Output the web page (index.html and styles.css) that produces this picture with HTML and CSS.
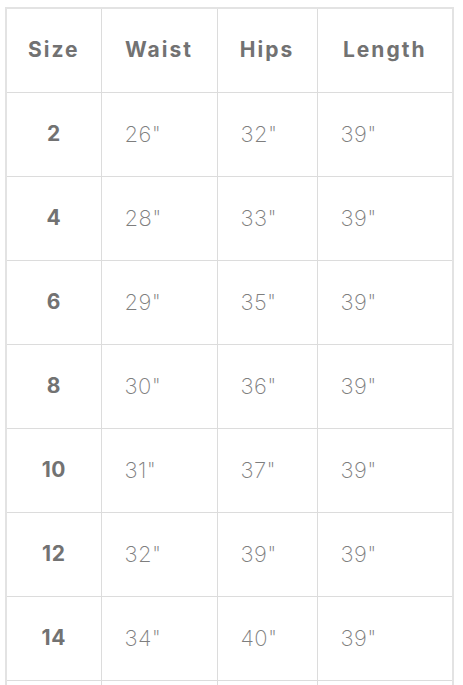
FILE: index.html
```html
<!DOCTYPE html>
<html>
<head>
<meta charset="utf-8">
<link rel="stylesheet" href="styles.css">
</head>
<body>
<table class="size-table">
  <colgroup>
    <col class="c-size"><col class="c-waist"><col class="c-hips"><col class="c-length">
  </colgroup>
  <thead>
    <tr><th class="size">Size</th><th class="head">Waist</th><th class="head">Hips</th><th class="head">Length</th></tr>
  </thead>
  <tbody>
    <tr><td class="size">2</td><td>26"</td><td>32"</td><td>39"</td></tr>
    <tr><td class="size">4</td><td>28"</td><td>33"</td><td>39"</td></tr>
    <tr><td class="size">6</td><td>29"</td><td>35"</td><td>39"</td></tr>
    <tr><td class="size">8</td><td>30"</td><td>36"</td><td>39"</td></tr>
    <tr><td class="size">10</td><td>31"</td><td>37"</td><td>39"</td></tr>
    <tr><td class="size">12</td><td>32"</td><td>39"</td><td>39"</td></tr>
    <tr><td class="size">14</td><td>34"</td><td>40"</td><td>39"</td></tr>
    <tr class="empty"><td></td><td></td><td></td><td></td></tr>
  </tbody>
</table>
</body>
</html>
```
FILE: styles.css
```css
html, body {
  background: #ffffff;
}
body {
  margin: 7px 0 0 5px;
  font-family: "Inter", sans-serif;
}
.size-table {
  border-collapse: collapse;
  width: 447px;
  table-layout: fixed;
  border: 2px solid #e3e3e3;
}
.c-size { width: 95px; }
.c-waist { width: 116px; }
.c-hips { width: 100px; }
.c-length { width: 136px; }
.size-table th,
.size-table td {
  border: 1px solid #dcdcdc;
  height: 81px;
  padding: 0 0 2px 23px;
  vertical-align: middle;
  text-align: left;
  color: #7e7e7e;
  font-size: 22px;
  font-weight: 200;
  letter-spacing: 0.4px;
}
.size-table th {
  height: 81px;
  font-weight: 700;
  color: #727272;
  text-align: center;
  padding: 0 0 2px 0;
  font-size: 21px;
  letter-spacing: 2px;
}
.size-table .size {
  text-align: center;
  padding: 0 0 2px 0;
  font-weight: 700;
  color: #727272;
  font-size: 21px;
  letter-spacing: 0.5px;
}
.size-table th.size {
  letter-spacing: 2px;
}
```
